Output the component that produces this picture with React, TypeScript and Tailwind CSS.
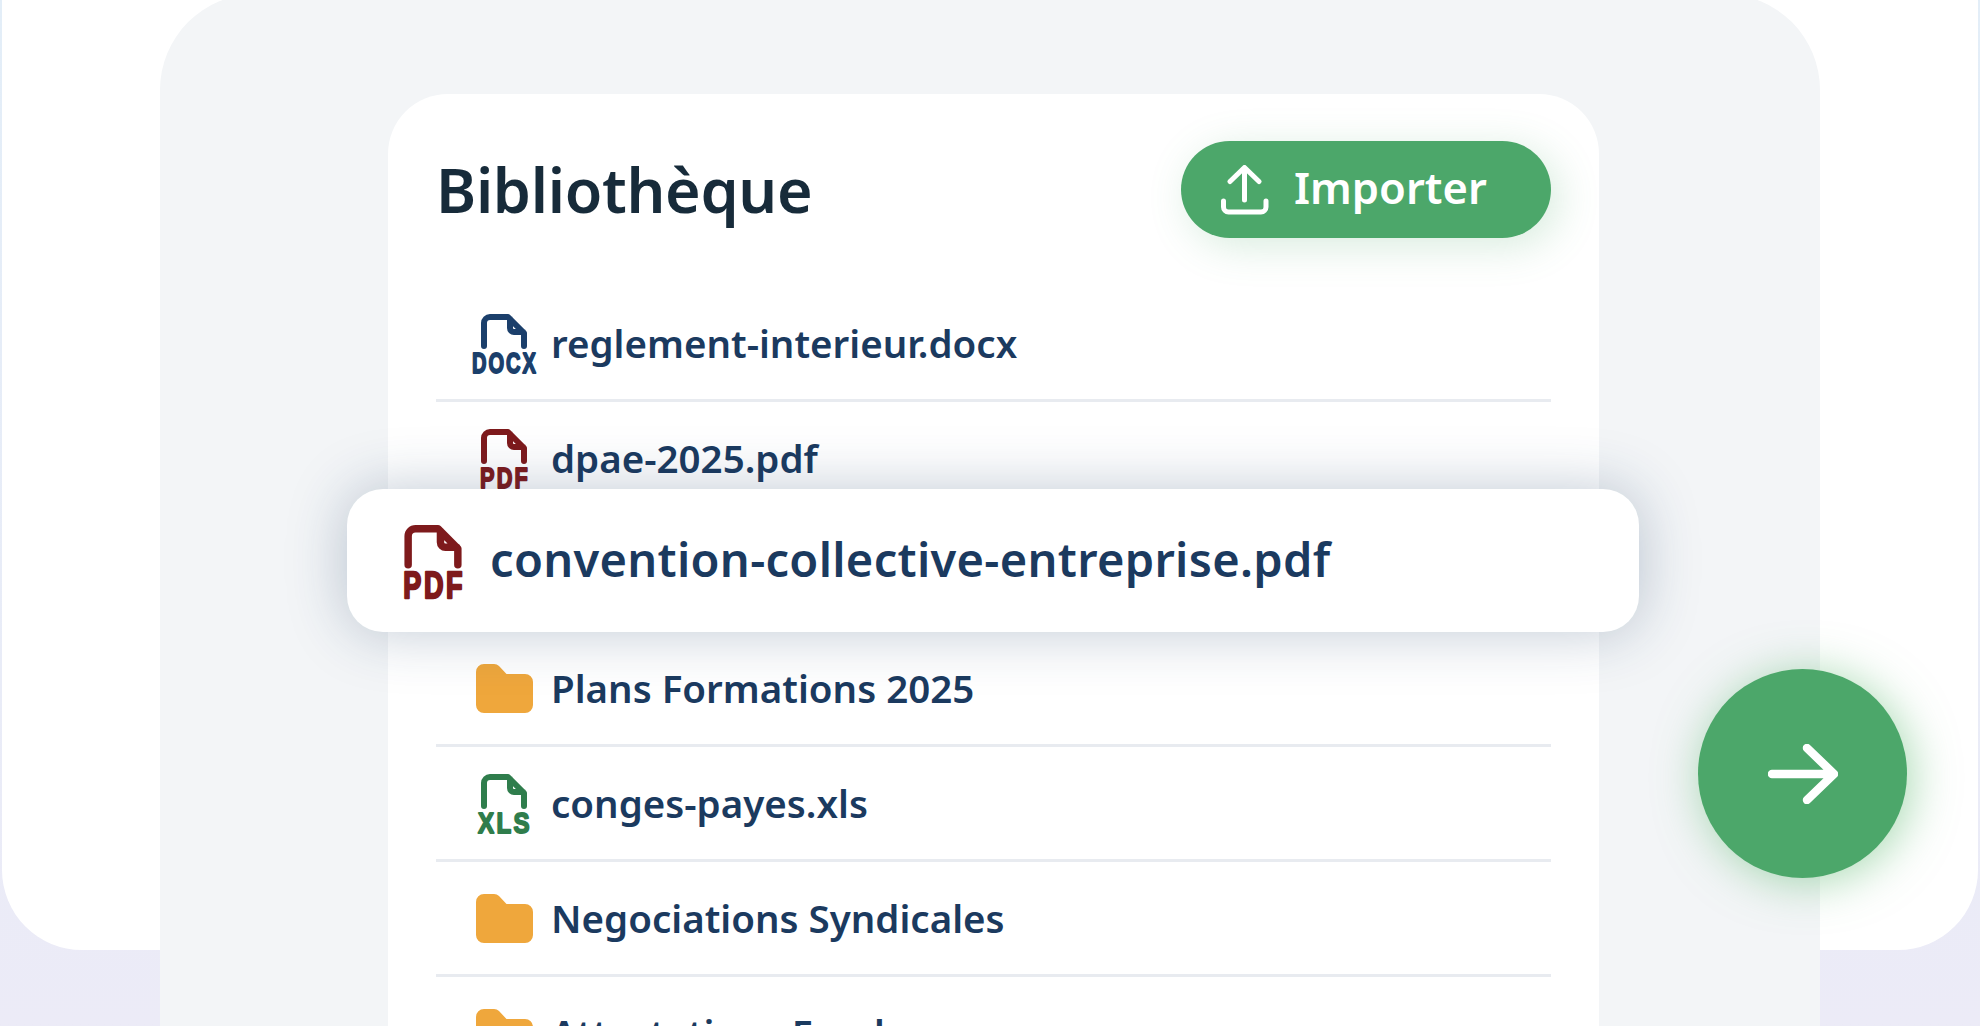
import type { ReactNode } from 'react'

function FileIcon({ label, color, textWidth, big }: { label: string; color: string; textWidth: number; big?: boolean }) {
  return (
    <svg viewBox="0 0 66 62" className={big ? 'h-[78px] w-[82px] shrink-0 overflow-visible' : 'h-[62px] w-[66px] shrink-0 overflow-visible'}>
      <path
        d="M13 34V11a6 6 0 0 1 6-6h18l16 16v13M39 7v9a4 4 0 0 0 4 4h9"
        fill="none"
        stroke={color}
        strokeWidth="6"
        strokeLinecap="round"
        strokeLinejoin="round"
      />
      <text
        x="34"
        y="61"
        textAnchor="middle"
        fill={color}
        stroke={color}
        strokeWidth="1.9"
        strokeLinejoin="round"
        fontFamily="Liberation Sans, sans-serif"
        fontWeight="700"
        fontSize="30"
        letterSpacing="3"
        textLength={textWidth}
        lengthAdjust="spacingAndGlyphs"
      >
        {label}
      </text>
    </svg>
  )
}

function FolderIcon() {
  return (
    <svg viewBox="0 0 57 49" className="h-[49px] w-[57px]">
      <path
        d="M0 8a8 8 0 0 1 8-8h10c2 0 3.6.8 5 2l7.5 8H49a8 8 0 0 1 8 8v23a8 8 0 0 1-8 8H8a8 8 0 0 1-8-8Z"
        fill="#efa73c"
      />
    </svg>
  )
}

function Row({ icon, name }: { icon: ReactNode; name: string }) {
  return (
    <div className="flex h-[115px] items-center border-b-[3px] border-[#e8ebf0] pl-[35px]">
      <div className="flex w-[66px] justify-center">{icon}</div>
      <span className="ml-[14px] pt-[2px] text-[38.5px] font-semibold text-[#1b3a5f]">{name}</span>
    </div>
  )
}

export default function App() {
  return (
    <div className="relative h-[1026px] overflow-hidden bg-gradient-to-b from-[#e3eef8] to-[#ecebf7] font-['Noto_Sans',sans-serif]">
      {/* white sheet behind the panel */}
      <div className="absolute inset-x-[2px] top-[-100px] h-[1050px] rounded-[80px] bg-white" />

      <div className="relative mx-[160px] mt-[-6px] h-[1100px] rounded-t-[96px] bg-[#f3f5f7] pt-[100px]">
        <div className="ml-[228px] mr-[221px] h-[1000px] rounded-t-[60px] bg-white px-[48px] pt-[47px]">
          <div className="flex items-center justify-between">
            <h1 className="text-[61px] font-semibold tracking-[-0.3px] text-[#172b3a]">Bibliothèque</h1>
            <button className="flex h-[97px] w-[370px] items-center rounded-full bg-[#4ca76a] pl-[40px] text-[43.5px] font-semibold text-white shadow-[8px_8px_40px_rgba(76,167,106,0.22)]">
              <svg viewBox="0 0 48 50" className="mr-[25px] h-[50px] w-[48px]" fill="none" stroke="currentColor" strokeWidth="5" strokeLinecap="round" strokeLinejoin="round">
                <path d="M23.5 35V3M9 16.5 23.5 2.5 38 16.5M2.5 36v6a5 5 0 0 0 5 5H40a5 5 0 0 0 5-5v-6" />
              </svg>
              <span className="pb-[4px]">Importer</span>
            </button>
          </div>

          <div className="relative mt-[49px]">
            <Row icon={<FileIcon label="DOCX" color="#1b3f6b" textWidth={66} />} name="reglement-interieur.docx" />
            <Row icon={<FileIcon label="PDF" color="#7e1a1c" textWidth={50} />} name="dpae-2025.pdf" />
            <div className="h-[115px]" />
            <Row icon={<FolderIcon />} name="Plans Formations 2025" />
            <Row icon={<FileIcon label="XLS" color="#2f7d4c" textWidth={54} />} name="conges-payes.xls" />
            <Row icon={<FolderIcon />} name="Negociations Syndicales" />
            <Row icon={<FolderIcon />} name="Attestations Fonds" />

            {/* raised row */}
            <div className="absolute left-[-89px] right-[-88px] top-[202px] flex h-[143px] items-center rounded-[36px] bg-white pl-[45px] shadow-[0_0_60px_rgba(30,60,100,0.28)]">
              <FileIcon big label="PDF" color="#7e1a1c" textWidth={50} />
              <span className="ml-[16px] pb-[2px] text-[47px] font-semibold tracking-[0.3px] text-[#1b3a5f]">convention-collective-entreprise.pdf</span>
            </div>
          </div>
        </div>
      </div>

      <div className="absolute left-[1698px] top-[669px] flex h-[209px] w-[209px] items-center justify-center rounded-full bg-[#4ca76a] shadow-[4px_4px_46px_rgba(80,180,100,0.5)]">
        <svg viewBox="0 0 70 60" className="h-[60px] w-[70px]" fill="none" stroke="white" strokeWidth="8.5" strokeLinecap="round" strokeLinejoin="round">
          <path d="M4 30h62M39 4l27 26-27 26" />
        </svg>
      </div>
    </div>
  )
}
